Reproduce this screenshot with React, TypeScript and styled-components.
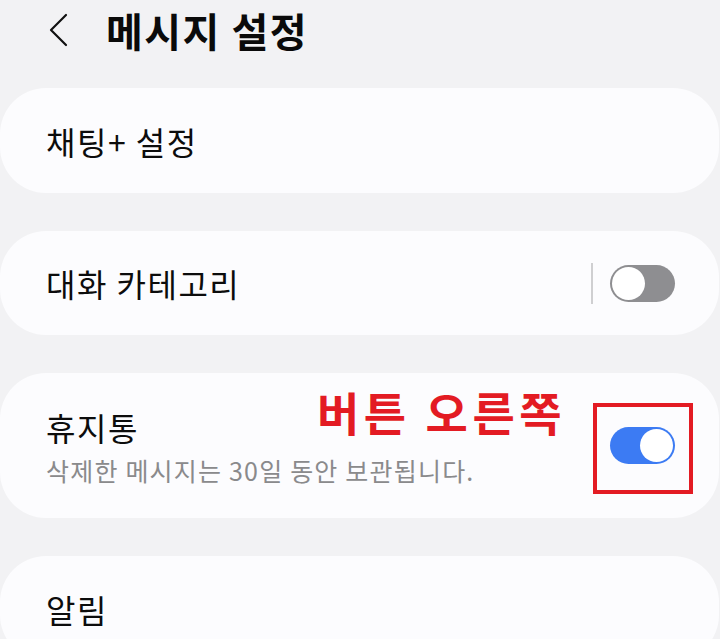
import React from "react";
import styled, { createGlobalStyle } from "styled-components";

const Global = createGlobalStyle`
  html, body {
    margin: 0;
    padding: 0;
    background: #f2f2f4;
    overflow: hidden;
  }
  body {
    font-family: "Noto Sans CJK KR", "Noto Sans", sans-serif;
    color: #0c0c0c;
  }
`;

const Page = styled.div`
  width: 720px;
  height: 639px;
  overflow: hidden;
  background: #f2f2f4;
`;

const Header = styled.header`
  height: 60px;
  display: flex;
  align-items: center;
  padding-left: 48px;
`;

const BackButton = styled.button`
  border: 0;
  background: none;
  padding: 0;
  width: 20px;
  height: 34px;
  display: flex;
  color: #111;
`;

const Title = styled.h1`
  margin: 0 0 0 38px;
  font-size: 40px;
  font-weight: 700;
  line-height: 1;
  letter-spacing: 1.5px;
  color: #0a0a0a;
`;

const List = styled.div`
  margin-top: 28px;
  display: flex;
  flex-direction: column;
  gap: 38px;
`;

const Card = styled.div<{ $h: number }>`
  position: relative;
  width: 719px;
  height: ${(p) => p.$h}px;
  box-sizing: border-box;
  background: #fcfcfe;
  border-radius: 46px;
  display: flex;
  align-items: center;
  padding: 0 44px 0 46px;
  flex-shrink: 0;
`;

const TextCol = styled.div<{ $shift?: number }>`
  flex: 1;
  display: flex;
  flex-direction: column;
  padding-top: ${(p) => p.$shift ?? 0}px;
`;

const ItemTitle = styled.div`
  font-size: 32px;
  line-height: 40px;
  letter-spacing: 1.5px;
  color: #0c0c0c;
`;

const ItemSub = styled.div`
  font-size: 25px;
  line-height: 46px;
  letter-spacing: 1.2px;
  color: #8a8a8c;
`;

const Divider = styled.div`
  width: 2px;
  height: 41px;
  background: #cfcfd1;
  margin-right: 17px;
`;

const ToggleWrap = styled.div`
  position: relative;
  display: flex;
`;

const Track = styled.div<{ $on: boolean }>`
  width: 65px;
  height: 37px;
  box-sizing: border-box;
  border-radius: 19px;
  padding: 2px;
  background: ${(p) => (p.$on ? "#3c7bf3" : "#8e8e91")};
  display: flex;
  justify-content: ${(p) => (p.$on ? "flex-end" : "flex-start")};
`;

const Thumb = styled.div`
  width: 33px;
  height: 33px;
  border-radius: 50%;
  background: #fff;
`;

const HighlightBox = styled.div`
  position: absolute;
  left: -17px;
  right: -18px;
  top: -24px;
  bottom: -30px;
  border: 4px solid #e31b23;
`;

const Annotation = styled.div`
  position: absolute;
  left: 317px;
  top: 15px;
  font-size: 46px;
  font-weight: 700;
  line-height: 1;
  letter-spacing: 4.5px;
  color: #e31b23;
  white-space: nowrap;
`;

const Toggle = ({ on }: { on: boolean }) => (
  <Track $on={on}>
    <Thumb />
  </Track>
);

export default function App() {
  return (
    <Page>
      <Global />
      <Header>
        <BackButton aria-label="뒤로">
          <svg width="20" height="34" viewBox="0 0 20 34" fill="none">
            <path d="M18 2 L3 17 L18 32" stroke="#111" strokeWidth="2.2" strokeLinecap="round" strokeLinejoin="round" />
          </svg>
        </BackButton>
        <Title>메시지 설정</Title>
      </Header>
      <List>
        <Card $h={105}>
          <ItemTitle>채팅+ 설정</ItemTitle>
        </Card>
        <Card $h={104}>
          <TextCol>
            <ItemTitle>대화 카테고리</ItemTitle>
          </TextCol>
          <Divider />
          <Toggle on={false} />
        </Card>
        <Card $h={145}>
          <TextCol $shift={8}>
            <ItemTitle>휴지통</ItemTitle>
            <ItemSub>삭제한 메시지는 30일 동안 보관됩니다.</ItemSub>
          </TextCol>
          <Annotation>버튼 오른쪽</Annotation>
          <ToggleWrap>
            <Toggle on={true} />
            <HighlightBox />
          </ToggleWrap>
        </Card>
        <Card $h={105}>
          <ItemTitle>알림</ItemTitle>
        </Card>
      </List>
    </Page>
  );
}
